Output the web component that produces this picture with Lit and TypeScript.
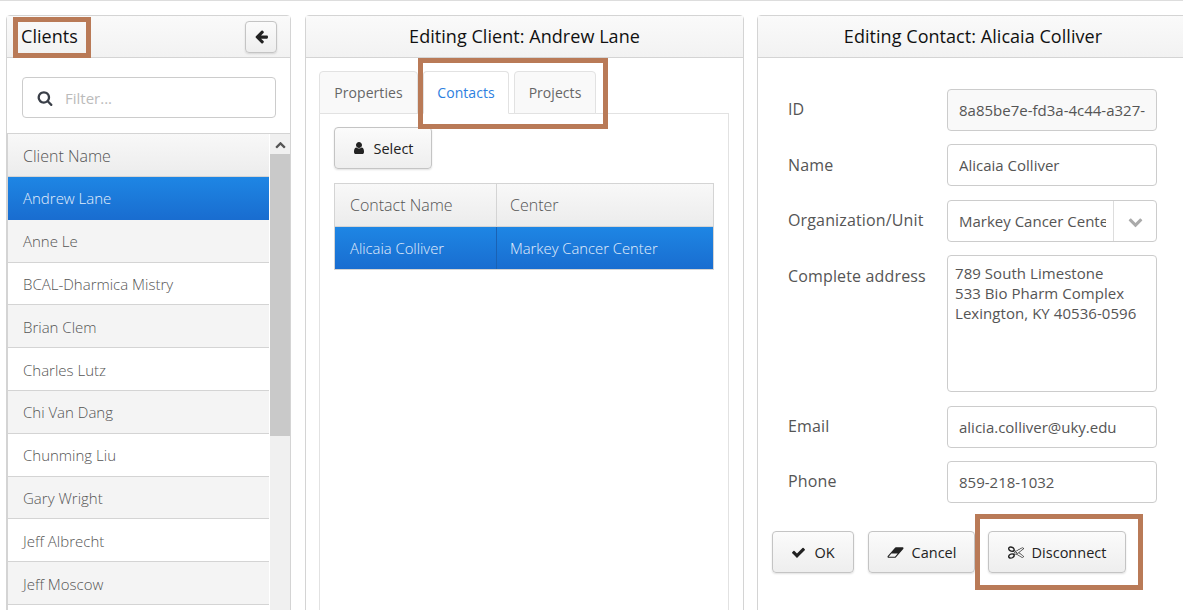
import {LitElement, html, css, svg} from 'lit';
import {customElement} from 'lit/decorators.js';

const ICONS = {
  arrowLeft: svg`<path d="M1664 896v128q0 53-32.5 90.5t-84.5 37.5h-704l293 294q38 36 38 90t-38 90l-75 76q-37 37-90 37-52 0-91-37l-651-652q-37-37-37-90 0-52 37-91l651-650q38-38 91-38 52 0 90 38l75 74q38 38 38 91t-38 91l-293 293h704q52 0 84.5 37.5t32.5 90.5z"/>`,
  search: svg`<path d="M1216 832q0-185-131.5-316.5t-316.5-131.5-316.5 131.5-131.5 316.5 131.5 316.5 316.5 131.5 316.5-131.5 131.5-316.5zm512 832q0 52-38 90t-90 38q-54 0-90-38l-343-342q-179 124-399 124-143 0-273.5-55.5t-225-150-150-225-55.5-273.5 55.5-273.5 150-225 225-150 273.5-55.5 273.5 55.5 225 150 150 225 55.5 273.5q0 220-124 399l343 343q37 37 37 90z"/>`,
  user: svg`<path d="M1536 1399q0 109-62.5 187t-150.5 78h-854q-88 0-150.5-78t-62.5-187q0-85 8.5-160.5t31.5-152 58.5-131 94-89 134.5-34.5q131 128 313 128t313-128q76 0 134.5 34.5t94 89 58.5 131 31.5 152 8.5 160.5zm-256-887q0 159-112.5 271.5t-271.5 112.5-271.5-112.5-112.5-271.5 112.5-271.5 271.5-112.5 271.5 112.5 112.5 271.5z"/>`,
  check: svg`<path d="M1671 566q0 40-28 68l-724 724-136 136q-28 28-68 28t-68-28l-136-136-362-362q-28-28-28-68t28-68l136-136q28-28 68-28t68 28l294 295 656-657q28-28 68-28t68 28l136 136q28 28 28 68z"/>`,
  chevronDown: svg`<path d="M1683 808l-742 741q-19 19-45 19t-45-19l-742-741q-19-19-19-45.5t19-45.5l166-165q19-19 45-19t45 19l531 531 531-531q19-19 45-19t45 19l166 165q19 19 19 45.5t-19 45.5z"/>`,
  chevronUp: svg`<path d="M1683 1331l-166 165q-19 19-45 19t-45-19l-531-531-531 531q-19 19-45 19t-45-19l-166-165q-19-19-19-45.5t19-45.5l742-741q19-19 45-19t45 19l742 741q19 19 19 45.5t-19 45.5z"/>`,
  eraser: svg`<path d="M960 1408l336-384h-768l-336 384h768zm1013-1077q15 34 9.5 71.5t-30.5 65.5l-896 1024q-38 44-96 44h-768q-38 0-69.5-20.5t-47.5-54.5q-15-34-9.5-71.5t30.5-65.5l896-1024q38-44 96-44h768q38 0 70 20.5t47 54.5z"/>`,
  scissors: svg`<path d="M960 896q26 0 45 19t19 45-19 45-45 19-45-19-19-45 19-45 45-19zm300 64l507 398q28 20 25 56-5 35-35 51l-128 64q-13 7-29 7-17 0-31-8l-690-387-110 66q-8 4-12 5 14 49 10 97-7 77-56 147.5t-132 123.5q-132 84-277 84-136 0-222-78-90-84-79-207 7-76 56-147t131-124q132-84 278-84 83 0 151 31 9-13 22-22l122-73-122-73q-13-9-22-22-68 31-151 31-146 0-278-84-82-53-131-124t-56-147q-5-59 15.5-113t63.5-93q85-79 222-79 145 0 277 84 83 52 132 123t56 148q4 48-10 97 4 1 12 5l110 66 690-387q14-8 31-8 16 0 29 7l128 64q30 16 35 51 3 36-25 56zm-681-260q46-42 21-108t-106-117q-92-59-192-59-74 0-113 36-46 42-21 108t106 117q92 59 192 59 74 0 113-36zm-85 745q81-51 106-117t-21-108q-39-36-113-36-100 0-192 59-81 51-106 117t21 108q39 36 113 36 100 0 192-59zm178-613l96 58v-11q0-36 33-56l14-8-79-47-26 26q-3 3-10 11t-12 12q-2 2-4 3.5t-3 2.5zm224 224l96 32 736-576-128-64-768 431v113l-160 96 9 8q2 2 7 6 4 4 11 12t11 12l26 26zm704 416l128-64-520-408-177 138q-2 3-13 7z"/>`
};

const icon = (name: keyof typeof ICONS, size = 14, vb = '0 0 1792 1792') =>
  html`<svg class="icon" width=${size} height=${size} viewBox=${vb} fill="currentColor">${ICONS[name]}</svg>`;

const CLIENTS = [
  'Andrew Lane', 'Anne Le', 'BCAL-Dharmica Mistry', 'Brian Clem', 'Charles Lutz',
  'Chi Van Dang', 'Chunming Liu', 'Gary Wright', 'Jeff Albrecht', 'Jeff Moscow', ''
];

@customElement('app-root')
export class AppRoot extends LitElement {
  static styles = css`
    :host {
      display: block;
      position: relative;
      width: 1183px;
      height: 610px;
      overflow: hidden;
      background: #fff;
      border-top: 1px solid #ddd;
      box-sizing: border-box;
      font-family: "Open Sans", "Liberation Sans", sans-serif;
      color: #555;
    }
    * { box-sizing: border-box; }
    .layout {
      display: grid;
      grid-template-columns: 285px 439px 431px;
      gap: 14px;
      padding: 14px 0 0 6px;
      height: 700px;
    }
    .layout > .panel:last-child { margin-left: -1px; }
    .panel {
      border: 1px solid #d4d4d4;
      border-radius: 4px 4px 0 0;
      display: flex;
      flex-direction: column;
      height: 700px;
    }
    .head {
      height: 42px;
      flex: none;
      display: flex;
      align-items: center;
      justify-content: center;
      font-size: 18px;
      letter-spacing: 0.05px;
      color: #111;
      background: linear-gradient(#fafafa, #f2f2f2);
      border-bottom: 1px solid #d4d4d4;
    }
    .head.split { justify-content: space-between; padding: 0 13px 0 14px; }
    .title { padding-bottom: 2px; }
    .btn {
      display: inline-flex;
      align-items: center;
      justify-content: center;
      height: 42px;
      gap: 8px;
      border: 1px solid #c4c4c4;
      border-radius: 4px;
      background: linear-gradient(#fbfbfb, #eeeeee);
      box-shadow: 0 1px 2px rgba(0, 0, 0, 0.12);
      font: 14.5px "Open Sans", sans-serif;
      color: #222;
      padding: 0;
    }
    .back { width: 32px; height: 32px; }
    .filter-wrap { padding: 19px 14px 15px 15px; flex: none; }
    .filter {
      height: 41px;
      border: 1px solid #ccc;
      border-radius: 4px;
      display: flex;
      align-items: center;
      gap: 12px;
      padding-left: 14px;
      font-size: 15px;
      color: #bbb;
    }
    .filter .icon { color: #3a3f48; }
    .grid { display: flex; flex: 1; border-left: 1px solid #d4d4d4; border-top: 1px solid #d4d4d4; min-height: 0; }
    .list { width: 261px; flex: none; }
    .grid-head, .row {
      display: flex;
      align-items: center;
      padding-left: 15px;
      border-bottom: 1px solid #d4d4d4;
      font-weight: 300;
    }
    .grid-head {
      height: 43px;
      padding-top: 2px;
      font-size: 16px;
      font-weight: 300;
      background: linear-gradient(#f8f8f8, #ececec);
      color: #555;
    }
    .row { height: 42.8px; padding-top: 1px; font-size: 15px; background: #fff; }
    .row.alt { background: #f4f4f4; }
    .row.sel {
      background: linear-gradient(#1e86e4, #196dd0);
      color: #e4eefb;
      border-bottom-color: #196dd0;
    }
    .scrollbar { width: 20px; flex: none; margin-left: 1px; background: #f0f0f0; display: flex; flex-direction: column; }
    .scroll-up { height: 20px; display: flex; align-items: center; justify-content: center; color: #555; }
    .thumb { height: 282px; background: #c9c9c9; }
    .tabs-wrap { padding: 13px 14px 0 13px; display: flex; flex-direction: column; flex: 1; }
    .tabs { display: flex; gap: 5px; height: 43px; flex: none; position: relative; z-index: 1; }
    .tab {
      border: 1px solid #e2e2e2;
      border-radius: 4px 4px 0 0;
      display: flex;
      align-items: center;
      justify-content: center;
      font-size: 14px;
      letter-spacing: 0.05px;
      background: #f9f9f9;
      color: #666;
    }
    .tab.props { width: 99px; margin-right: 0; }
    .tab.contacts { width: 86px; background: #fff; color: #2d7fe0; border-bottom-color: #fff; }
    .tab.projects { width: 82px; }
    .tab-body { border: 1px solid #e2e2e2; margin-top: -1px; padding: 13px 14px; flex: 1; }
    .select-btn { width: 98px; gap: 7px; }
    .contacts-table { margin-top: 14px; width: 380px; border: 1px solid #d4d4d4; }
    .t-row { display: grid; grid-template-columns: 162px 1fr; height: 42px; }
    .t-row > div { display: flex; align-items: center; padding-left: 15px; font-weight: 300; }
    .t-row > div:first-child { border-right: 1px solid #d4d4d4; }
    .t-row > div:last-child { padding-left: 13px; }
    .t-head { background: linear-gradient(#f8f8f8, #ececec); border-bottom: 1px solid #d4d4d4; font-size: 16px; height: 43px; }
    .t-sel { background: linear-gradient(#1e86e4, #196dd0); color: #e4eefb; font-size: 14.8px; }
    .t-row.t-sel > div:first-child { border-right-color: #1a62b4; }
    .form {
      padding: 31px 0 0 30px;
      display: grid;
      grid-template-columns: 159px 210px;
      align-content: start;
    }
    .form label { font-size: 16px; letter-spacing: 0.15px; color: #555; padding-top: 9px; }
    .form label.low { padding-top: 10px; }
    .field {
      height: 42px;
      border: 1px solid #ccc;
      border-radius: 4px;
      padding: 0 11px;
      margin-bottom: 13px;
      font: 15px "Open Sans", sans-serif;
      color: #555;
      width: 100%;
      display: block;
      background: #fff;
      outline: none;
    }
    .field.readonly { background: #f9f9f9; }
    .field.name { margin-bottom: 14px; }
    .combo { display: flex; align-items: center; padding: 0 0 0 11px; overflow: hidden; }
    .combo span { flex: 1; white-space: nowrap; overflow: hidden; margin-right: 7px; }
    .combo b {
      flex: none;
      width: 43px;
      height: 100%;
      border-left: 1px solid #ddd;
      display: flex;
      align-items: center;
      justify-content: center;
      color: #aaa;
    }
    textarea.field { height: 137px; margin-bottom: 14px; padding: 7px; resize: none; line-height: 20px; letter-spacing: 0.05px; overflow: hidden; }
    .actions { grid-column: 1 / -1; display: flex; margin: 15px 0 0 -16px; }
    .ok { width: 82px; margin-right: 14px; }
    .cancel { width: 107px; margin-right: 13px; }
    .disconnect { width: 138px; }
    .mark { position: absolute; border: 5px solid #b97a57; pointer-events: none; }
    .mark-clients { left: 13px; top: 16px; width: 78px; height: 41px; }
    .mark-tabs { left: 418px; top: 57px; width: 190px; height: 71px; }
    .mark-disconnect { left: 975px; top: 513px; width: 168px; height: 76px; }
  `;

  render() {
    return html`
      <div class="layout">
        <section class="panel">
          <div class="head split">
            <span class="title">Clients</span>
            <button class="btn back">${icon('arrowLeft', 15)}</button>
          </div>
          <div class="filter-wrap">
            <div class="filter">${icon('search', 16)}<span>Filter...</span></div>
          </div>
          <div class="grid">
            <div class="list">
              <div class="grid-head">Client Name</div>
              ${CLIENTS.map((name, i) => html`
                <div class="row ${i === 0 ? 'sel' : i % 2 ? 'alt' : ''}">${name}</div>
              `)}
            </div>
            <div class="scrollbar">
              <div class="scroll-up">${icon('chevronUp', 11)}</div>
              <div class="thumb"></div>
            </div>
          </div>
        </section>

        <section class="panel">
          <div class="head"><span class="title">Editing Client: Andrew Lane</span></div>
          <div class="tabs-wrap">
            <div class="tabs">
              <div class="tab props">Properties</div>
              <div class="tab contacts">Contacts</div>
              <div class="tab projects">Projects</div>
            </div>
            <div class="tab-body">
              <button class="btn select-btn">${icon('user', 14)}Select</button>
              <div class="contacts-table">
                <div class="t-row t-head"><div>Contact Name</div><div>Center</div></div>
                <div class="t-row t-sel"><div>Alicaia Colliver</div><div>Markey Cancer Center</div></div>
              </div>
            </div>
          </div>
        </section>

        <section class="panel">
          <div class="head"><span class="title">Editing Contact: Alicaia Colliver</span></div>
          <div class="form">
            <label>ID</label>
            <input class="field readonly" readonly .value=${'8a85be7e-fd3a-4c44-a327-'} />
            <label class="low">Name</label>
            <input class="field name" .value=${'Alicaia Colliver'} />
            <label>Organization/Unit</label>
            <div class="field combo"><span>Markey Cancer Center</span><b>${icon('chevronDown', 15)}</b></div>
            <label class="low">Complete address</label>
            <textarea class="field" .value=${'789 South Limestone\n533 Bio Pharm Complex\nLexington, KY 40536-0596'}></textarea>
            <label>Email</label>
            <input class="field" .value=${'alicia.colliver@uky.edu'} />
            <label>Phone</label>
            <input class="field" .value=${'859-218-1032'} />
            <div class="actions">
              <button class="btn ok">${icon('check', 15)}OK</button>
              <button class="btn cancel">${icon('eraser', 17, '0 0 2048 1792')}Cancel</button>
              <button class="btn disconnect">${icon('scissors', 16)}Disconnect</button>
            </div>
          </div>
        </section>
      </div>
      <div class="mark mark-clients"></div>
      <div class="mark mark-tabs"></div>
      <div class="mark mark-disconnect"></div>
    `;
  }
}
